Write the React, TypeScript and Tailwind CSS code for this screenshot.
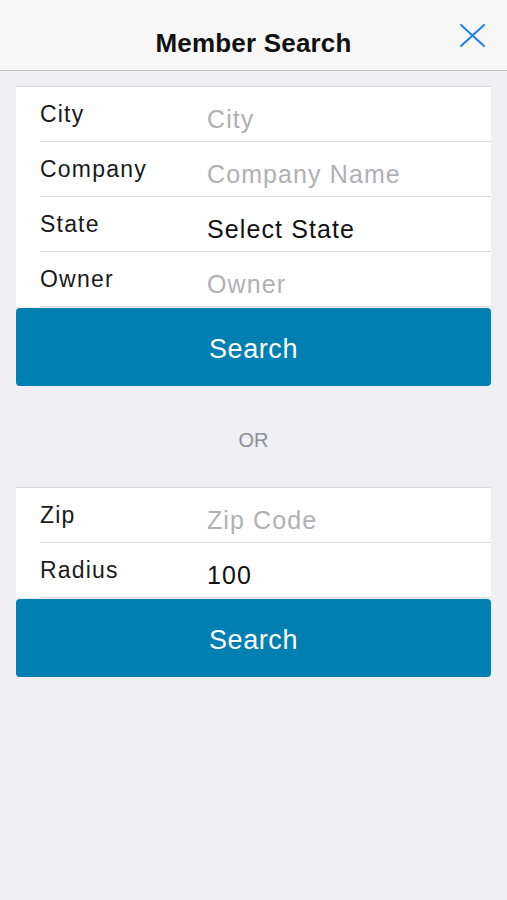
import React from "react";

const font = { fontFamily: '"Liberation Sans", Arial, sans-serif' };

type Row = { label: string; value: string; placeholder: boolean };

function Field({ row }: { row: Row }) {
  return (
    <div className="ml-6 flex h-[55px] border-b border-[#dcdce0]">
      <div className="w-[167px] pt-[13px] text-[23px] leading-[28px] tracking-[1.2px] text-[#1a1a1a]">
        {row.label}
      </div>
      <div
        className={
          "pt-[17px] text-[25px] leading-[30px] tracking-[1.1px] " +
          (row.placeholder ? "text-[#b0b0b5]" : "text-[#111111]")
        }
      >
        {row.value}
      </div>
    </div>
  );
}

function SearchButton() {
  return (
    <button className="flex h-[78px] w-full items-center justify-center rounded-[4px] bg-[#007fb2] pt-[5px] text-[27px] tracking-[0.6px] text-white">
      Search
    </button>
  );
}

export default function App() {
  const first: Row[] = [
    { label: "City", value: "City", placeholder: true },
    { label: "Company", value: "Company Name", placeholder: true },
    { label: "State", value: "Select State", placeholder: false },
    { label: "Owner", value: "Owner", placeholder: true },
  ];
  const second: Row[] = [
    { label: "Zip", value: "Zip Code", placeholder: true },
    { label: "Radius", value: "100", placeholder: false },
  ];
  return (
    <div className="min-h-[900px] w-[507px] bg-[#efeff4]" style={font}>
      <div className="relative flex h-[71px] items-center justify-center border-b border-[#c4c4c8] bg-[#f7f7f7]">
        <div className="pt-[17px] text-[26px] font-semibold tracking-[0.2px] text-[#111111]">Member Search</div>
        <svg
          className="absolute left-[459px] top-[23px]"
          width="27"
          height="25"
          viewBox="0 0 27 25"
        >
          <path d="M2 2 L25 23 M25 2 L2 23" stroke="#1f7ef3" strokeWidth="2" strokeLinecap="round" />
        </svg>
      </div>
      <div className="mx-4 mt-[15px]">
        <div className="border-t border-[#dcdce0] bg-white">
          {first.map((r) => (
            <Field key={r.label} row={r} />
          ))}
        </div>
        <div className="pt-px">
          <SearchButton />
        </div>
        <div className="flex h-[101px] items-center justify-center pt-[7px] text-[20px] text-[#8e8e93]">OR</div>
        <div className="border-t border-[#dcdce0] bg-white">
          {second.map((r) => (
            <Field key={r.label} row={r} />
          ))}
        </div>
        <div className="pt-px">
          <SearchButton />
        </div>
      </div>
    </div>
  );
}
